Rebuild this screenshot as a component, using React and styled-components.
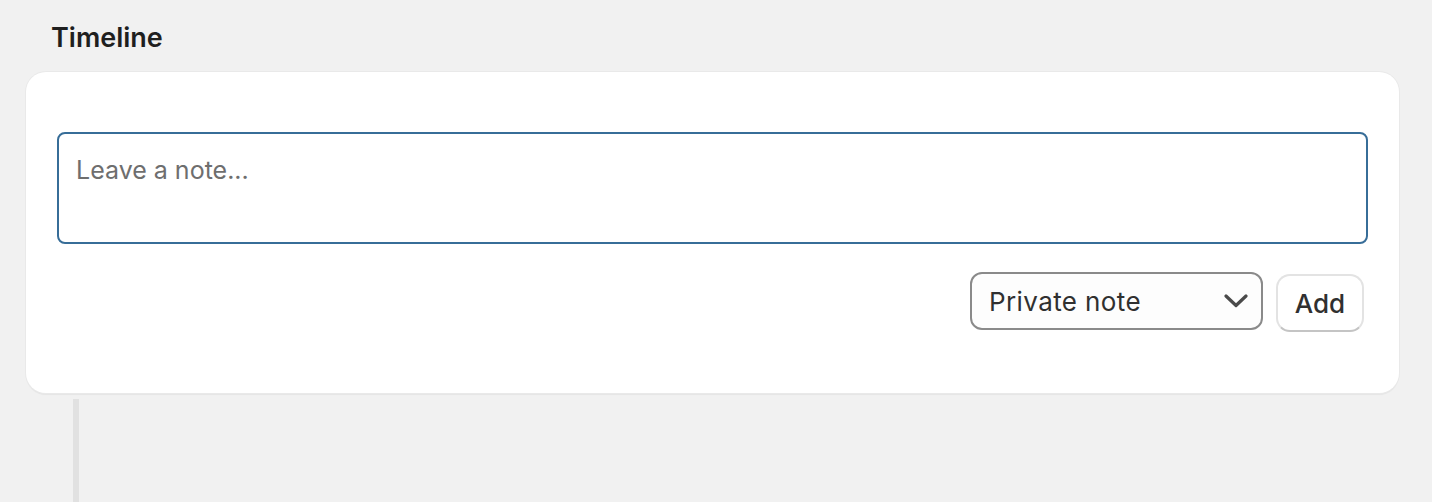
import React, {useState} from "react";
import styled, {createGlobalStyle} from "styled-components";

const GlobalStyle = createGlobalStyle`
  html, body {
    margin: 0;
    padding: 0;
    background: #f1f1f1;
    font-family: Inter, "Noto Sans", "Liberation Sans", sans-serif;
    color: #303030;
  }
`

const Page = styled.div`
  padding: 18px 33px 0 26px;
  min-height: 502px;
  box-sizing: border-box;
  display: flex;
  flex-direction: column;
`
const Title = styled.h2`
  margin: 0 0 14px 25px;
  font-size: 27px;
  line-height: 40px;
  font-weight: 600;
  color: #1f1f1f;
`
const Card = styled.div`
  background: #fff;
  border-radius: 20px;
  padding: 60px 31px 61px 31px;
  box-shadow: 0 0 0 1px #e9e9e9, 0 2px 1px rgba(0, 0, 0, 0.05);
  display: flex;
  flex-direction: column;
  gap: 28px;
`
const NoteInput = styled.textarea`
  display: block;
  box-sizing: border-box;
  width: 100%;
  height: 112px;
  resize: none;
  border: 2px solid #376d98;
  border-radius: 8px;
  padding: 16px 17px;
  font-family: inherit;
  font-size: 25px;
  line-height: 40px;
  color: #303030;
  outline: none;

  &::placeholder {
    color: #6e6e6e;
  }
`
const Actions = styled.div`
  display: flex;
  justify-content: flex-end;
  align-items: flex-start;
  gap: 13px;
  padding-right: 4px;
`
const SelectWrap = styled.div`
  position: relative;
  width: 293px;
  height: 58px;
`
const Select = styled.select`
  appearance: none;
  box-sizing: border-box;
  width: 100%;
  height: 100%;
  border: 2px solid #8a8a8a;
  border-radius: 12px;
  background: #fdfdfd;
  padding: 0 50px 0 17px;
  font-family: inherit;
  font-size: 26px;
  letter-spacing: 0.4px;
  color: #303030;
  outline: none;
`
const Chevron = styled.svg`
  position: absolute;
  right: 15px;
  top: 22px;
  pointer-events: none;
`
const Button = styled.button`
  box-sizing: border-box;
  margin-top: 2px;
  height: 58px;
  width: 88px;
  padding: 0;
  border: 2px solid #e3e3e3;
  border-bottom-color: #c4c4c4;
  border-radius: 14px;
  background: #fff;
  font-family: inherit;
  font-size: 26px;
  font-weight: 550;
  color: #303030;
  cursor: pointer;
`
const Line = styled.div`
  margin: 6px 0 0 47px;
  width: 6px;
  flex: 1;
  background: #e1e1e1;
`

const App = () => {
    const [note, setNote] = useState("");
    const [kind, setKind] = useState("private");

    return (
        <>
            <GlobalStyle/>
            <Page>
                <Title>Timeline</Title>
                <Card>
                    <NoteInput
                        value={note}
                        onChange={(event) => setNote(event.target.value)}
                        placeholder="Leave a note..."
                    />
                    <Actions>
                        <SelectWrap>
                            <Select value={kind} onChange={(event) => setKind(event.target.value)}>
                                <option value="private">Private note</option>
                                <option value="public">Public note</option>
                            </Select>
                            <Chevron width="24" height="14" viewBox="0 0 24 14">
                                <path d="M2 2 L12 11.5 L22 2" fill="none" stroke="#4a4a4a" strokeWidth="3.2" strokeLinecap="round" strokeLinejoin="round"/>
                            </Chevron>
                        </SelectWrap>
                        <Button>Add</Button>
                    </Actions>
                </Card>
                <Line/>
            </Page>
        </>
    );
}
export default App;
